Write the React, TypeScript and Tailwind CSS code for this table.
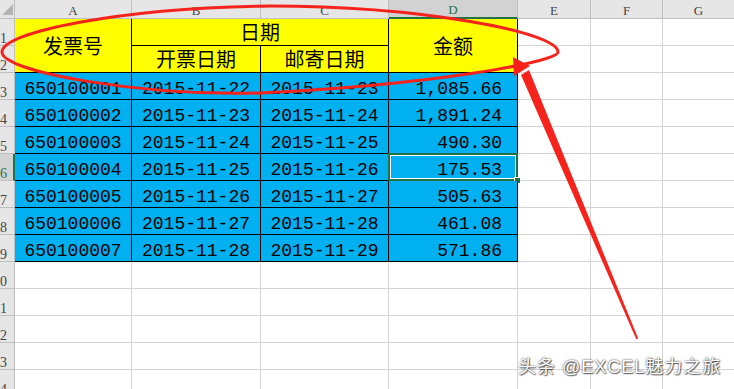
import React from "react";

const cols = ["A", "B", "C", "D", "E", "F", "G"];

const rows = [
  ["650100001", "2015-11-22", "2015-11-23", "1,085.66"],
  ["650100002", "2015-11-23", "2015-11-24", "1,891.24"],
  ["650100003", "2015-11-24", "2015-11-25", "490.30"],
  ["650100004", "2015-11-25", "2015-11-26", "175.53"],
  ["650100005", "2015-11-26", "2015-11-27", "505.63"],
  ["650100006", "2015-11-27", "2015-11-28", "461.08"],
  ["650100007", "2015-11-28", "2015-11-29", "571.86"],
];

const hdr =
  "flex items-center justify-center pt-[3px] border-r border-b border-[#bfbfbf] bg-[#e6e6e6] text-[13px] text-[#444] font-['Liberation_Serif',serif]";
const rowHdr =
  "flex items-end justify-end overflow-hidden pr-[7px] pb-[1px] border-r border-b border-[#bfbfbf] bg-[#e6e6e6] text-[14px] leading-[10px] text-[#444] font-['Liberation_Serif',serif]";
const empty = "border-r border-b border-[#d4d4d4] bg-white";
const yellow =
  "flex items-center justify-center border-r border-b border-black bg-[#ffff00] text-[20px] text-black font-['Noto_Sans_CJK_SC',sans-serif]";
const blue =
  "flex items-center pt-[6px] border-r border-b border-black bg-[#00b0f0] text-[18px] leading-[20px] text-black font-['Liberation_Mono',monospace] whitespace-nowrap";

function Empties({ n }: { n: number }) {
  return (
    <>
      {Array.from({ length: n }).map((_, i) => (
        <div key={i} className={empty} />
      ))}
    </>
  );
}

export default function App() {
  return (
    <div className="relative w-[734px] h-[389px] overflow-hidden bg-white">
      <div className="grid grid-cols-[15px_117px_129px_128px_129px_73px_72px_72px] grid-rows-[19px_repeat(14,27px)]">
        {/* corner */}
        <div className="relative border-r border-b border-[#bfbfbf] bg-[#e6e6e6]">
          <svg className="absolute left-0 top-0" width="15" height="19">
            <polygon points="2,15 13,15 13,4" fill="#b4b4b4" />
          </svg>
        </div>
        {cols.map((c) =>
          c === "D" ? (
            <div
              key={c}
              className="flex items-center justify-center pt-[3px] border-r border-[#bfbfbf] border-b-2 border-b-[#217346] bg-[#d2d2d2] text-[13px] text-[#217346] font-['Liberation_Serif',serif]"
            >
              {c}
            </div>
          ) : (
            <div key={c} className={hdr}>
              {c}
            </div>
          )
        )}

        {/* row 1 */}
        <div className={rowHdr}>
          <span>1</span>
        </div>
        <div className={`${yellow} row-span-2`}>发票号</div>
        <div className={`${yellow} col-span-2`}>日期</div>
        <div className={`${yellow} row-span-2`}>金额</div>
        <Empties n={3} />

        {/* row 2 */}
        <div className={rowHdr}>
          <span>2</span>
        </div>
        <div className={yellow}>开票日期</div>
        <div className={yellow}>邮寄日期</div>
        <Empties n={3} />

        {rows.map((r, i) => {
          const n = i + 3;
          const sel = n === 6;
          return (
            <React.Fragment key={n}>
              <div
                className={
                  sel
                    ? "flex items-end justify-end overflow-hidden pr-[6px] pb-[1px] border-b border-[#bfbfbf] border-r-2 border-r-[#217346] bg-[#d2d2d2] text-[14px] leading-[10px] text-[#217346] font-['Liberation_Serif',serif]"
                    : rowHdr
                }
              >
                <span>{n}</span>
              </div>
              <div className={`${blue} justify-center`}>{r[0]}</div>
              <div className={`${blue} justify-center`}>{r[1]}</div>
              <div className={`${blue} justify-center`}>{r[2]}</div>
              <div className={`${blue} justify-end pr-[15px] relative`}>
                {r[3]}
                {sel && (
                  <div className="absolute -left-[1px] -top-[1px] -right-[1px] -bottom-[1px] border-2 border-[#217346]">
                    <div className="absolute inset-0 border border-white" />
                    <div className="absolute -right-[5px] -bottom-[5px] w-[7px] h-[7px] bg-[#217346] border border-white" />
                  </div>
                )}
              </div>
              <Empties n={3} />
            </React.Fragment>
          );
        })}

        {[10, 11, 12, 13, 14].map((n) => (
          <React.Fragment key={n}>
            <div className={rowHdr}>
              <span>{n}</span>
            </div>
            <Empties n={7} />
          </React.Fragment>
        ))}
      </div>

      {/* annotation: red ellipse and arrow */}
      <svg
        className="absolute left-0 top-0 pointer-events-none"
        width="734"
        height="389"
        viewBox="0 0 734 389"
      >
        <path
          d="M 2 52 C 2 32, 120 8, 270 6 C 420 6, 558 32, 558 52 C 558 62, 430 85, 260 93 C 140 96, 2 72, 2 52 Z"
          fill="none"
          stroke="#f5231b"
          strokeWidth="3"
        />
        <polygon points="513,57 514,76 530,66" fill="#f5231b" />
        <polygon points="529,70 521,75 636.3,339.3 638.2,338.6" fill="#f5231b" />
      </svg>

      <div className="absolute left-[518px] top-[356px] text-[18px] leading-[22px] tracking-[1px] text-white font-['Liberation_Sans','Noto_Sans_CJK_SC',sans-serif] whitespace-nowrap [text-shadow:0_0_2px_rgba(0,0,0,0.9),1px_1px_1px_rgba(0,0,0,0.5)]">
        头条 @EXCEL魅力之旅
      </div>
    </div>
  );
}
